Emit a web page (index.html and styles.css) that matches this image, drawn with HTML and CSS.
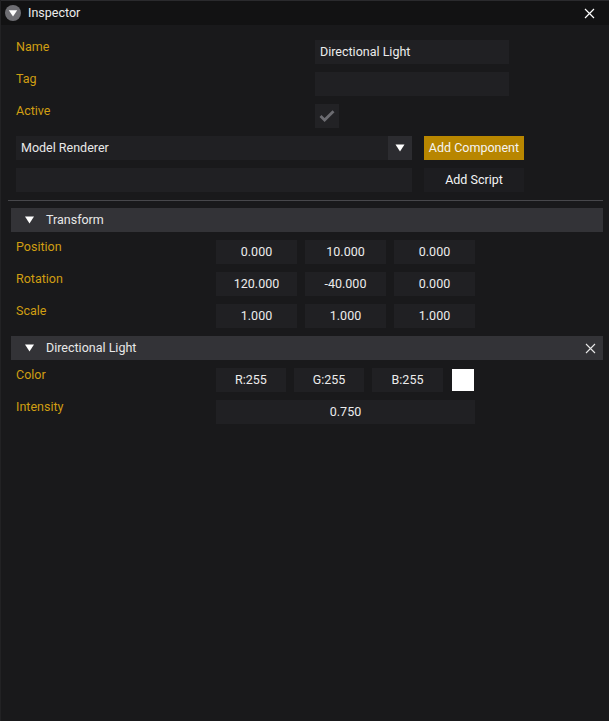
FILE: index.html
```html
<!DOCTYPE html>
<html>
<head>
<meta charset="utf-8">
<link rel="stylesheet" href="styles.css">
</head>
<body>
<div class="window">
  <div class="titlebar">
    <span class="title-icon">
      <svg width="16" height="16" viewBox="0 0 16 16"><circle cx="8" cy="8" r="8" fill="#6e6e73"/><path d="M3.8 5.2 H12.2 L8 11.6 Z" fill="#ffffff"/></svg>
    </span>
    <span class="title">Inspector</span>
    <span class="close">
      <svg width="11" height="11" viewBox="0 0 11 11"><path d="M1 1 L10 10 M10 1 L1 10" stroke="#ffffff" stroke-width="1.2"/></svg>
    </span>
  </div>
  <div class="content">
    <div class="props props-top">
      <div class="label">Name</div>
      <div class="field field-left">Directional Light</div>
      <div class="label">Tag</div>
      <div class="field"></div>
      <div class="label">Active</div>
      <div class="check">
        <svg width="24" height="24" viewBox="0 0 24 24"><path d="M5.5 12 L9.6 16 L18.5 7.2" fill="none" stroke="#6c6c71" stroke-width="2.8"/></svg>
      </div>
    </div>
    <div class="add-row">
      <div class="dropdown">
        <span class="dd-text">Model Renderer</span>
        <span class="dd-arrow"><svg width="10" height="8" viewBox="0 0 10 8"><path d="M0.5 0.5 H9.5 L5 7.5 Z" fill="#ffffff"/></svg></span>
      </div>
      <button class="btn btn-gold">Add Component</button>
    </div>
    <div class="add-row">
      <div class="dropdown empty"></div>
      <button class="btn btn-dark">Add Script</button>
    </div>
    <div class="sep"></div>
    <div class="header">
      <span class="hdr-tri"><svg width="9" height="8" viewBox="0 0 9 8"><path d="M0 0.5 H9 L4.5 7.5 Z" fill="#ffffff"/></svg></span>
      <span class="hdr-text">Transform</span>
    </div>
    <div class="props props-vec">
      <div class="label">Position</div>
      <div class="field">0.000</div><div class="field">10.000</div><div class="field">0.000</div>
      <div class="label">Rotation</div>
      <div class="field">120.000</div><div class="field">-40.000</div><div class="field">0.000</div>
      <div class="label">Scale</div>
      <div class="field">1.000</div><div class="field">1.000</div><div class="field">1.000</div>
    </div>
    <div class="header">
      <span class="hdr-tri"><svg width="9" height="8" viewBox="0 0 9 8"><path d="M0 0.5 H9 L4.5 7.5 Z" fill="#ffffff"/></svg></span>
      <span class="hdr-text">Directional Light</span>
      <span class="hdr-close"><svg width="11" height="11" viewBox="0 0 11 11"><path d="M1 1 L10 10 M10 1 L1 10" stroke="#e8e8e8" stroke-width="1.1"/></svg></span>
    </div>
    <div class="props props-light">
      <div class="label">Color</div>
      <div class="color-fields">
        <div class="field cf">R:255</div>
        <div class="field cf">G:255</div>
        <div class="field cf cf-b">B:255</div>
        <div class="swatch"></div>
      </div>
      <div class="label">Intensity</div>
      <div class="field intensity">0.750</div>
    </div>
  </div>
</div>
</body>
</html>
```

FILE: styles.css
```css
html, body {
  margin: 0;
  padding: 0;
  background: #19191b;
}
body {
  font-family: Roboto, "Noto Sans", sans-serif;
  font-size: 12.5px;
  color: #e8e8e8;
}
.window {
  width: 609px;
  height: 721px;
  background: #19191b;
  box-sizing: border-box;
  border-left: 1px solid #222224;
  overflow: hidden;
}
.titlebar {
  height: 25px;
  box-sizing: border-box;
  border-top: 1px solid #2a2a2d;
  background: #121213;
  display: flex;
  align-items: center;
  padding-left: 4px;
}
.title-icon {
  width: 16px;
  height: 16px;
  display: flex;
}
.title {
  margin-left: 7px;
  color: #ececec;
  line-height: 14px;
}
.close {
  margin-left: auto;
  margin-right: 14px;
  display: flex;
}
.content {
  padding: 15px 6px 0 7px;
  display: flex;
  flex-direction: column;
  gap: 8px;
}
.props {
  display: grid;
  row-gap: 8px;
  padding-left: 8px;
}
.props-top {
  grid-template-columns: 299px 194px;
}
.props-vec {
  grid-template-columns: 192px 81px 81px 81px;
  column-gap: 8px;
}
.props-light {
  grid-template-columns: 200px 259px;
}
.label {
  color: #d09e12;
  line-height: 14px;
  height: 24px;
}
.field {
  height: 24px;
  background: #202023;
  display: flex;
  align-items: center;
  justify-content: center;
  color: #ececec;
  line-height: 14px;
}
.field-left {
  justify-content: flex-start;
  padding-left: 5px;
}
.check {
  width: 24px;
  height: 24px;
  background: #222225;
  display: flex;
}
.add-row {
  display: flex;
  gap: 12px;
  padding-left: 8px;
}
.dropdown {
  width: 396px;
  flex: none;
  height: 24px;
  background: #202023;
  display: flex;
  align-items: center;
}
.dd-text {
  padding-left: 5px;
  flex: 1;
  line-height: 14px;
}
.dd-arrow {
  width: 24px;
  height: 24px;
  background: #2c2c30;
  display: flex;
  align-items: center;
  justify-content: center;
}
.btn {
  width: 100px;
  flex: none;
  height: 24px;
  border: none;
  padding: 0;
  font: inherit;
  color: #f4f4f4;
  line-height: 14px;
}
.btn-gold {
  background: #b88600;
}
.btn-dark {
  background: #1d1d20;
}
.sep {
  height: 1px;
  background: #47474b;
  margin-bottom: -1px;
}
.header {
  margin-left: 3px;
  height: 24px;
  background: #333337;
  display: flex;
  align-items: center;
}
.hdr-tri {
  display: flex;
  margin-left: 14px;
}
.hdr-text {
  margin-left: 12px;
  line-height: 14px;
}
.hdr-close {
  margin-left: auto;
  margin-right: 7px;
  display: flex;
}
.color-fields {
  display: flex;
  align-items: flex-start;
}
.cf {
  width: 70px;
  margin-right: 8px;
}
.cf-b {
  width: 71px;
  margin-right: 9px;
}
.swatch {
  width: 22px;
  height: 22px;
  margin-top: 1px;
  background: #ffffff;
}
.intensity {
  width: 259px;
}
```
